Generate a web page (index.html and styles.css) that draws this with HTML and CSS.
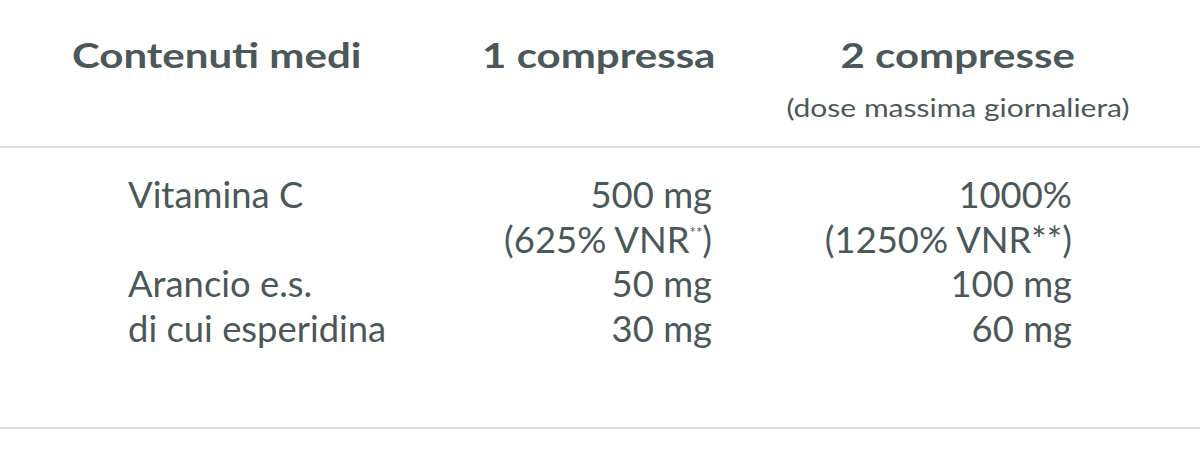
FILE: index.html
```html
<!DOCTYPE html>
<html lang="it">
<head>
<meta charset="utf-8">
<link rel="stylesheet" href="styles.css">
</head>
<body>
<div class="table">
  <div class="head">
    <div class="h1"><span class="wide">Contenuti medi</span></div>
    <div class="h2"><span class="wide">1 compressa</span></div>
    <div class="h3">
      <div><span class="wide">2 compresse</span></div>
      <div class="sub"><span class="wide">(dose massima giornaliera)</span></div>
    </div>
  </div>
  <div class="rows">
    <div class="c1">Vitamina C</div>
    <div class="c2">500 mg<br>(625% VNR<sup>**</sup>)</div>
    <div class="c3">1000%<br>(1250% VNR**)</div>
    <div class="c1">Arancio e.s.<br>di cui esperidina</div>
    <div class="c2">50 mg<br>30 mg</div>
    <div class="c3">100 mg<br>60 mg</div>
  </div>
</div>
</body>
</html>
```
FILE: styles.css
```css
html, body {
  margin: 0;
  padding: 0;
  background: #ffffff;
}
body {
  font-family: "Lato", "Noto Sans", sans-serif;
  color: #4b5859;
  width: 1200px;
  height: 452px;
  overflow: hidden;
}
.table {
  display: flex;
  flex-direction: column;
}
.head {
  display: grid;
  grid-template-columns: 416px 227px 1fr;
  align-content: start;
  padding: 32px 0 0 72px;
  height: 114px;
  border-bottom: 2px solid #dadede;
  font-weight: 700;
  font-size: 35px;
  line-height: 44px;
}
.wide {
  display: inline-block;
  transform: scaleX(1.2);
  white-space: nowrap;
}
.h1 .wide {
  transform-origin: left center;
}
.h2 {
  text-align: right;
}
.h2 .wide {
  transform-origin: right center;
}
.h3 {
  text-align: center;
}
.h3 .wide {
  transform-origin: center center;
}
.sub {
  font-weight: 400;
  font-size: 25px;
  line-height: 30px;
  margin-top: 16px;
}
.rows {
  display: grid;
  grid-template-columns: 300px 284px 360px;
  align-content: start;
  padding: 24px 128px 0 128px;
  height: 255px;
  border-bottom: 2px solid #dadede;
  font-size: 36.4px;
  line-height: 44.7px;
  font-weight: 400;
}
.c2, .c3 {
  text-align: right;
}
sup {
  font-size: 15px;
  line-height: 0;
  vertical-align: 15px;
}
```
